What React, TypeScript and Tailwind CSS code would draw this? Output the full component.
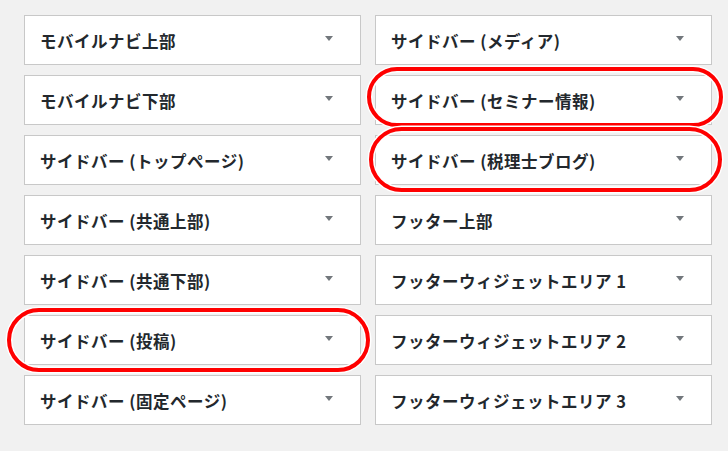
import React from "react";

const left = [
  "モバイルナビ上部",
  "モバイルナビ下部",
  "サイドバー (トップページ)",
  "サイドバー (共通上部)",
  "サイドバー (共通下部)",
  "サイドバー (投稿)",
  "サイドバー (固定ページ)",
];
const right = [
  "サイドバー (メディア)",
  "サイドバー (セミナー情報)",
  "サイドバー (税理士ブログ)",
  "フッター上部",
  "フッターウィジェットエリア 1",
  "フッターウィジェットエリア 2",
  "フッターウィジェットエリア 3",
];

function Box({ title }: { title: string }) {
  return (
    <div className="h-[50px] bg-white border border-[#c8c8c8] flex items-center justify-between pl-[15px] pr-[27px]">
      <span className="text-[16.5px] font-bold text-[#23282d] leading-none tracking-[0.5px] translate-y-[1px]">{title}</span>
      <svg width="8" height="5" viewBox="0 0 8 5" className="-translate-y-[2px]">
        <polygon points="0,0 8,0 4,5" fill="#72777c" />
      </svg>
    </div>
  );
}

export default function App() {
  return (
    <div
      className="relative w-[728px] h-[451px] bg-[#f1f1f1] overflow-hidden"
      style={{ fontFamily: '"Noto Sans CJK JP", "Noto Sans", sans-serif' }}
    >
      <div className="grid grid-cols-[337px_337px] gap-x-[14px] pl-[24px] pt-[15px]">
        <div className="flex flex-col gap-[10px]">
          {left.map((t) => (
            <Box key={t} title={t} />
          ))}
        </div>
        <div className="flex flex-col gap-[10px]">
          {right.map((t) => (
            <Box key={t} title={t} />
          ))}
        </div>
      </div>
      <div className="absolute left-[7px] top-[308px] w-[363px] h-[64px] rounded-full border-4 border-[#ff0000] shadow-[0_0_0_1.5px_white,inset_0_0_0_1.5px_white]" />
      <div className="absolute left-[367px] top-[67px] w-[356px] h-[60px] rounded-full border-4 border-[#ff0000] shadow-[0_0_0_1.5px_white,inset_0_0_0_1.5px_white]" />
      <div className="absolute left-[369px] top-[127px] w-[353px] h-[65px] rounded-full border-4 border-[#ff0000] shadow-[0_0_0_1.5px_white,inset_0_0_0_1.5px_white]" />
    </div>
  );
}
